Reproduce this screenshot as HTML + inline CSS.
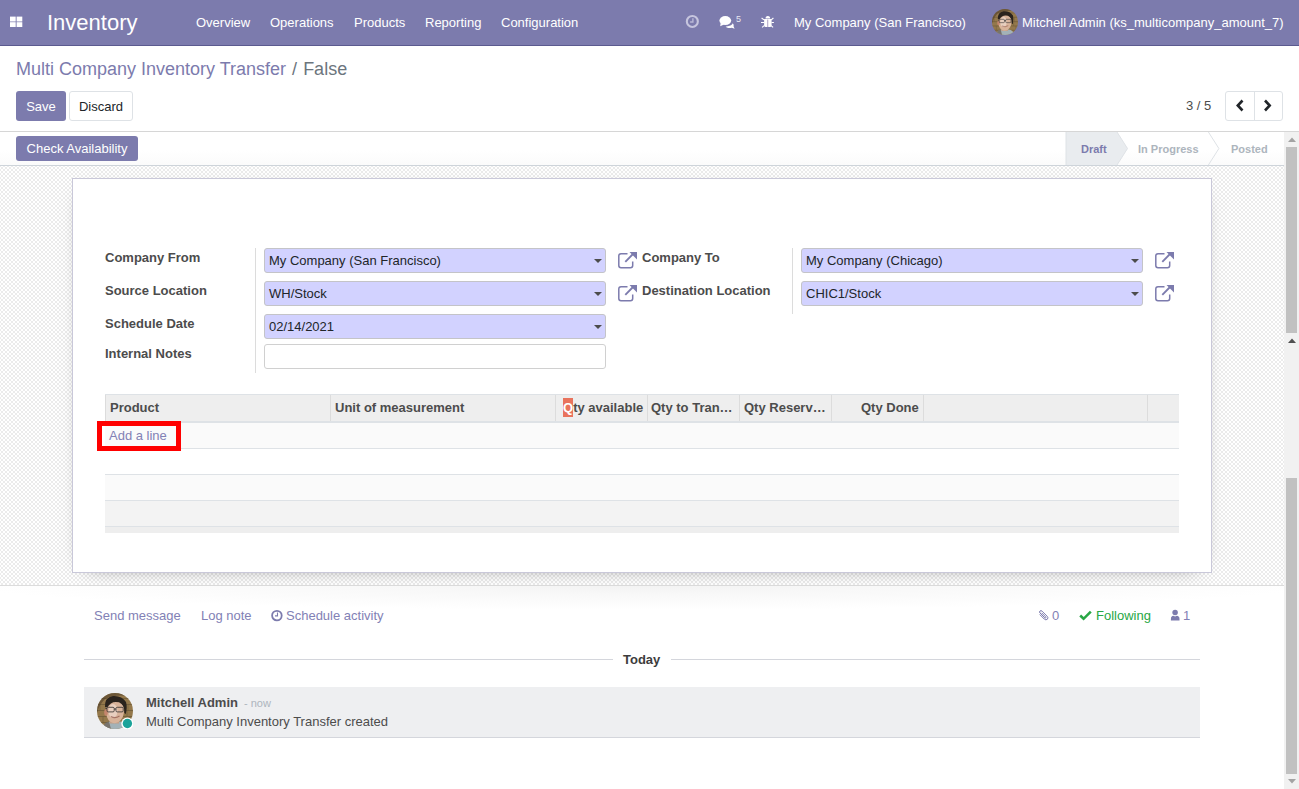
<!DOCTYPE html>
<html><head><meta charset="utf-8">
<style>
*{box-sizing:border-box;margin:0;padding:0}
html,body{width:1299px;height:789px;overflow:hidden;background:#fff;font-family:"Liberation Sans",sans-serif;font-size:13px;color:#4c4c4c}
.a{position:absolute;white-space:nowrap;line-height:15px}
.b{font-weight:bold}
svg.a{line-height:0}
#nav{position:absolute;left:0;top:0;width:1299px;height:46px;background:#7c7bad;border-bottom:1px solid #5b5a8f}
#nav .t{color:#fff}
#cp{position:absolute;left:0;top:46px;width:1299px;height:86px;background:#fff;border-bottom:1px solid #d6d6d6}
.btn{position:absolute;border-radius:3px;font-size:13px;text-align:center;white-space:nowrap}
.bp{background:#7c7bad;color:#fff}
.bs{background:#fff;color:#212529;border:1px solid #dee2e6}
#sb{position:absolute;left:0;top:132px;width:1284px;height:34px;background:linear-gradient(#fff 55%,#fbfbfb);border-bottom:1px solid #ced4da}
#bg{position:absolute;left:0;top:166px;width:1284px;height:420px;border-bottom:1px solid #dadada;background:#fff}
#sheet{position:absolute;left:72px;top:178px;width:1140px;height:395px;background:#fff;border:1px solid #c9c8d9;box-shadow:0 5px 20px -15px rgba(0,0,0,.75)}
.lbl{color:#4c4c4c}
.inp{position:absolute;height:25px;background:#d2d2ff;border:1px solid #c4c4c8;border-radius:3px;color:#222}
.car{position:absolute;width:0;height:0;border-left:4px solid transparent;border-right:4px solid transparent;border-top:4px solid #4c4c4c}
.vsep{position:absolute;width:1px;background:#dcdcdc}
#chat{position:absolute;left:0;top:586px;width:1284px;height:203px;background:#fff}
.lk{color:#8281b5}
.th{position:absolute;top:394px;height:29px;background:#eee;border-top:1px solid #dee2e6;border-bottom:2px solid #dee2e6}
.cd{position:absolute;top:395px;width:1px;height:26px;background:#dcdcdc}
.row{position:absolute;left:105px;width:1074px;border-bottom:1px solid #dee2e6}
</style></head><body>

<svg width="0" height="0" style="position:absolute"><defs>
<clipPath id="avc"><circle cx="18" cy="18" r="18"/></clipPath>
<symbol id="face" viewBox="0 0 36 36"><g clip-path="url(#avc)">
<rect width="36" height="36" fill="#94794b"/>
<path d="M0 5.5H36M0 11.5H36M0 17.5H36M0 23.5H36M0 29.5H36" stroke="#6e5a38" stroke-width="1.1" opacity=".75"/>
<path d="M5 0V5.5M14 5.5V11.5M3 11.5V17.5M31 11.5V17.5M30 17.5V23.5M33 23.5V29.5M6 23.5V29.5" stroke="#6e5a38" stroke-width="1" opacity=".6"/>
<path d="M0 0H36V4Q20 0 8 6Q2 12 0 20Z" fill="#4a3a28" opacity=".55"/>
<path d="M0 26Q6 30 8 36H0Z" fill="#3a3028" opacity=".6"/>
<path d="M5 36Q7 29 13 28.5L23 28.5Q29 29 31 36Z" fill="#a3b2b8"/><path d="M5 36Q7 29 12 28.5L14 36Z" fill="#5a4a3a" opacity=".6"/>
<path d="M13 25L22 25L22 30.5L13 30.5Z" fill="#c49e86"/>
<path d="M9.5 14Q10 8 18 7.8Q26.5 8.5 27 16Q27.5 25 21.5 29Q17 31.5 13 28.5Q9 25 9.3 19Z" fill="#d8b39a"/>
<ellipse cx="16" cy="18" rx="4.5" ry="7" fill="#efdccf" opacity=".7"/>
<ellipse cx="9" cy="19.5" rx="1.8" ry="3.3" fill="#c4856c"/>
<path d="M8 14Q7.5 4.5 16 3Q25 2.5 29 9Q30.5 14 28.8 21L27.3 20Q28 12 22 9.3Q14 7.5 10.3 14.5Z" fill="#2a231d"/>
<rect x="10" y="14.3" width="7.2" height="4.6" rx="1.2" fill="none" stroke="#45403c" stroke-width="0.9"/>
<rect x="19" y="14.3" width="7.2" height="4.6" rx="1.2" fill="none" stroke="#45403c" stroke-width="0.9"/>
<path d="M8.5 15.5H10M17.2 16H19" stroke="#3e3a38" stroke-width="1.1"/>
<path d="M14 23.5Q18 26 22.5 23" stroke="#8e5448" stroke-width="1.1" fill="none" opacity=".7"/>
</g></symbol></defs></svg>
<!-- NAVBAR -->
<div id="nav">
  <svg class="a" style="left:10px;top:16px" width="13" height="12" viewBox="0 0 13 12"><rect x="0" y="0.6" width="5.7" height="4.9" fill="#fff"/><rect x="6.6" y="0.6" width="5.7" height="4.9" fill="#fff"/><rect x="0" y="6.2" width="5.7" height="4.8" fill="#fff"/><rect x="6.6" y="6.2" width="5.7" height="4.8" fill="#fff"/></svg>
  <div class="t a" style="left:47px;top:10px;font-size:22px;line-height:26px">Inventory</div>
  <div class="t a" style="left:196px;top:15px">Overview</div>
  <div class="t a" style="left:270px;top:15px">Operations</div>
  <div class="t a" style="left:354px;top:15px">Products</div>
  <div class="t a" style="left:425px;top:15px">Reporting</div>
  <div class="t a" style="left:501px;top:15px">Configuration</div>
  <!-- clock -->
  <svg class="a" style="left:685px;top:14px" width="15" height="15" viewBox="0 0 15 15"><circle cx="7.35" cy="7.45" r="5.5" fill="none" stroke="#c6c5de" stroke-width="2.1"/><path d="M7.9 4.3V8H5.1" fill="none" stroke="#b9b8d6" stroke-width="1.4"/></svg>
  <!-- comments -->
  <svg class="a" style="left:718.5px;top:15.5px" width="17" height="14" viewBox="0 0 17 14"><ellipse cx="6.3" cy="4.6" rx="5.9" ry="4.5" fill="#fff"/><path d="M1.6 7 L1.2 10.3 L5 8.6Z" fill="#fff"/><path d="M6.6 10.4 Q9.5 10.6 12 9.3 Q13.5 8.4 13.7 7.3 Q15.2 8.6 14.6 10.4 L15.6 12.7 L12.8 11.7 Q11.2 12.3 9.3 12 Q7.5 11.6 6.6 10.4Z" fill="#fff"/></svg>
  <div class="a" style="left:736px;top:14px;font-size:9px;line-height:10px;color:#e8e8f2">5</div>
  <!-- bug -->
  <svg class="a" style="left:761px;top:15px" width="14" height="14" viewBox="0 0 14 14"><path d="M4.5 3.5 A2.35 2.6 0 0 1 9.2 3.5Z" fill="#fff"/><path d="M3.1 4H10.6V10.6Q10.6 12 9.2 12H4.5Q3.1 12 3.1 10.6Z" fill="#fff"/><path d="M0.6 3 L3 4.9 M12.4 3 L10.2 4.9 M0 7.5 H3.2 M12.9 7.5 H10.5 M1.1 12.4 L3.1 10.7 M12.1 12.4 L10.1 10.7" stroke="#fff" stroke-width="1.1"/><rect x="6.35" y="4.6" width="0.85" height="7.4" fill="#9e8fb8"/></svg>
  <div class="t a" style="left:794px;top:15px">My Company (San Francisco)</div>
  <!-- avatar -->
  <svg class="a" style="left:992px;top:9px" width="26" height="26" viewBox="0 0 36 36"><use href="#face"/></svg>
  <div class="t a" style="left:1022px;top:15px">Mitchell Admin (ks_multicompany_amount_7)</div>
</div>

<!-- CONTROL PANEL -->
<div id="cp">
  <div class="a" style="left:16px;top:12px;font-size:18px;line-height:22px"><span style="color:#7c7bad">Multi Company Inventory Transfer</span><span style="color:#6c757d;padding:0 6px 0 6px">/</span><span style="color:#6c757d">False</span></div>
  <div class="btn bp" style="left:16px;top:45px;width:50px;height:30px;line-height:32px">Save</div>
  <div class="btn bs" style="left:69px;top:45px;width:64px;height:30px;line-height:30px">Discard</div>
  <div class="a" style="left:1186px;top:52px;color:#4c4c4c">3 / 5</div>
  <div class="btn bs" style="left:1225px;top:45px;width:58px;height:30px"></div>
  <div class="a" style="left:1254px;top:46px;width:1px;height:28px;background:#dee2e6"></div>
  <svg class="a" style="left:1235px;top:53px" width="10" height="13" viewBox="0 0 10 13"><path d="M7.5 1.5 L2.8 6.5 L7.5 11.5" fill="none" stroke="#212529" stroke-width="2.6"/></svg>
  <svg class="a" style="left:1263px;top:53px" width="10" height="13" viewBox="0 0 10 13"><path d="M2 1.5 L6.7 6.5 L2 11.5" fill="none" stroke="#212529" stroke-width="2.6"/></svg>
</div>

<!-- STATUS BAR -->
<div id="sb">
  <div class="btn bp" style="left:16px;top:4px;width:122px;height:25px;line-height:25px">Check Availability</div>
  <svg class="a" style="left:1065px;top:0px" width="220" height="33" viewBox="0 0 220 33">
    <path d="M1 0 H52 L62.5 16.5 L52 33 H1Z" fill="#e9ecef"/>
    <path d="M1 0 V33" stroke="#dee2e6" stroke-width="1"/>
    <path d="M52 0 L62.5 16.5 L52 33" fill="none" stroke="#dee2e6" stroke-width="1"/>
    <path d="M143.4 0 L153.9 16.5 L143.4 33" fill="none" stroke="#dee2e6" stroke-width="1"/>
  </svg>
  <div class="a b" style="left:1081px;top:11px;font-size:11px;line-height:13px;color:#7c7bad">Draft</div>
  <div class="a b" style="left:1138px;top:11px;font-size:11px;line-height:13px;color:#adb5bd">In Progress</div>
  <div class="a b" style="left:1231px;top:11px;font-size:11px;line-height:13px;color:#adb5bd">Posted</div>
</div>

<!-- SHEET BG -->
<svg id="bgsvg" style="position:absolute;left:0;top:166px" width="1284" height="419" shape-rendering="crispEdges"><defs><pattern id="chk" x="1" y="3" width="4" height="4" patternUnits="userSpaceOnUse"><rect width="4" height="4" fill="#fff"/><rect x="2" y="0" width="2" height="2" fill="#ebebeb"/><rect x="0" y="2" width="2" height="2" fill="#ebebeb"/></pattern></defs><rect width="1284" height="419" fill="url(#chk)"/></svg>
<div style="position:absolute;left:0;top:585px;width:1284px;height:1px;background:#dcdcdc"></div>
<div id="sheet"></div>

<!-- FORM FIELDS -->
<div class="a b lbl" style="left:105px;top:250px">Company From</div>
<div class="a b lbl" style="left:105px;top:283px">Source Location</div>
<div class="a b lbl" style="left:105px;top:316px">Schedule Date</div>
<div class="a b lbl" style="left:105px;top:346px">Internal Notes</div>
<div class="vsep" style="left:255px;top:248px;height:125px"></div>

<div class="inp" style="left:264px;top:248px;width:342px"></div>
<div class="a" style="left:269px;top:253px;color:#212529">My Company (San Francisco)</div>
<div class="car" style="left:594px;top:259px"></div>
<div class="inp" style="left:264px;top:281px;width:342px"></div>
<div class="a" style="left:269px;top:286px;color:#212529">WH/Stock</div>
<div class="car" style="left:594px;top:292px"></div>
<div class="inp" style="left:264px;top:314px;width:342px"></div>
<div class="a" style="left:269px;top:319px;color:#212529">02/14/2021</div>
<div class="car" style="left:594px;top:325px"></div>
<div class="inp" style="left:264px;top:344px;width:342px;background:#fff;border-color:#d0d0d0"></div>

<svg class="a" style="left:617px;top:251px" width="21" height="18" viewBox="0 0 21 18"><path d="M10.5 2.8 H4 Q1.8 2.8 1.8 5 V14.5 Q1.8 16.7 4 16.7 H13.5 Q15.7 16.7 15.7 14.5 V10.5" fill="none" stroke="#7c7bad" stroke-width="1.5"/><path d="M8.3 10.8 L17 2" stroke="#7c7bad" stroke-width="1.9"/><path d="M12.5 1 H20 V8.5Z" fill="#7c7bad"/></svg>
<svg class="a" style="left:617px;top:284px" width="21" height="18" viewBox="0 0 21 18"><path d="M10.5 2.8 H4 Q1.8 2.8 1.8 5 V14.5 Q1.8 16.7 4 16.7 H13.5 Q15.7 16.7 15.7 14.5 V10.5" fill="none" stroke="#7c7bad" stroke-width="1.5"/><path d="M8.3 10.8 L17 2" stroke="#7c7bad" stroke-width="1.9"/><path d="M12.5 1 H20 V8.5Z" fill="#7c7bad"/></svg>

<div class="a b lbl" style="left:642px;top:250px">Company To</div>
<div class="a b lbl" style="left:642px;top:283px">Destination Location</div>
<div class="vsep" style="left:792px;top:248px;height:66px"></div>
<div class="inp" style="left:801px;top:248px;width:342px"></div>
<div class="a" style="left:806px;top:253px;color:#212529">My Company (Chicago)</div>
<div class="car" style="left:1131px;top:259px"></div>
<div class="inp" style="left:801px;top:281px;width:342px"></div>
<div class="a" style="left:806px;top:286px;color:#212529">CHIC1/Stock</div>
<div class="car" style="left:1131px;top:292px"></div>
<svg class="a" style="left:1154px;top:251px" width="21" height="18" viewBox="0 0 21 18"><path d="M10.5 2.8 H4 Q1.8 2.8 1.8 5 V14.5 Q1.8 16.7 4 16.7 H13.5 Q15.7 16.7 15.7 14.5 V10.5" fill="none" stroke="#7c7bad" stroke-width="1.5"/><path d="M8.3 10.8 L17 2" stroke="#7c7bad" stroke-width="1.9"/><path d="M12.5 1 H20 V8.5Z" fill="#7c7bad"/></svg>
<svg class="a" style="left:1154px;top:284px" width="21" height="18" viewBox="0 0 21 18"><path d="M10.5 2.8 H4 Q1.8 2.8 1.8 5 V14.5 Q1.8 16.7 4 16.7 H13.5 Q15.7 16.7 15.7 14.5 V10.5" fill="none" stroke="#7c7bad" stroke-width="1.5"/><path d="M8.3 10.8 L17 2" stroke="#7c7bad" stroke-width="1.9"/><path d="M12.5 1 H20 V8.5Z" fill="#7c7bad"/></svg>

<!-- TABLE -->
<div class="th" style="left:105px;width:1074px"></div>
<div class="cd" style="left:105px"></div>
<div class="cd" style="left:330px"></div>
<div class="cd" style="left:555px"></div>
<div class="cd" style="left:647px"></div>
<div class="cd" style="left:739px"></div>
<div class="cd" style="left:831px"></div>
<div class="cd" style="left:923px"></div>
<div class="cd" style="left:1147px"></div>
<div class="a b" style="left:110px;top:400px">Product</div>
<div class="a b" style="left:335px;top:400px">Unit of measurement</div>
<div class="a" style="left:563px;top:398px;width:10px;height:19px;background:#e9735d"></div>
<div class="a b" style="left:563px;top:400px"><span style="color:#fff">Q</span>ty available</div>
<div class="a b" style="left:651px;top:400px">Qty to Tran…</div>
<div class="a b" style="left:744px;top:400px">Qty Reserv…</div>
<div class="a b" style="left:861px;top:400px">Qty Done</div>

<div class="row" style="top:423px;height:26px;background:#fafafa"></div>
<div class="row" style="top:449px;height:26px;background:#fff"></div>
<div class="row" style="top:475px;height:26px;background:#fafafa"></div>
<div class="row" style="top:501px;height:26px;background:#f3f3f3"></div>
<div class="row" style="top:527px;height:6px;background:#eee;border:none"></div>
<div class="a lk" style="left:109px;top:428px">Add a line</div>
<div class="a" style="left:97px;top:421px;width:84px;height:30px;border:5px solid #ff0000"></div>

<!-- CHATTER -->
<div id="chat"></div>
<div class="a" style="left:0;top:586px;width:1284px;height:24px;background:radial-gradient(ellipse 52% 100% at 50% 0%,#f3f3f3 0%,#f8f8f8 35%,rgba(255,255,255,0) 100%)"></div>
<div class="a lk" style="left:94px;top:608px">Send message</div>
<div class="a lk" style="left:201px;top:608px">Log note</div>
<svg class="a" style="left:271px;top:609px" width="12" height="13" viewBox="0 0 12 13"><circle cx="5.9" cy="6.6" r="4.8" fill="none" stroke="#7c7bad" stroke-width="1.8"/><path d="M6.5 3.6V6.9H4" fill="none" stroke="#7c7bad" stroke-width="1.1"/></svg>
<div class="a lk" style="left:286px;top:608px">Schedule activity</div>

<svg class="a" style="left:1038px;top:609px" width="11" height="12" viewBox="0 0 11 12"><path transform="translate(11 0) scale(-1 1)" d="M9.3 5.5 L4.8 10 Q3 11.6 1.6 10.2 Q0.3 8.8 1.9 7.2 L7 2.1 Q8 1.1 9 2 Q10 3 9 4 L4.2 8.8 Q3.6 9.3 3.2 8.9 Q2.8 8.4 3.3 7.9 L7.4 3.8" fill="none" stroke="#7c7bad" stroke-width="1"/></svg>
<div class="a lk" style="left:1052px;top:608px">0</div>
<svg class="a" style="left:1079px;top:610px" width="13" height="11" viewBox="0 0 13 11"><path d="M1.2 5.5 L4.6 8.8 L11.8 1.6" fill="none" stroke="#28a745" stroke-width="2.6"/></svg>
<div class="a" style="left:1096px;top:608px;color:#28a745">Following</div>
<svg class="a" style="left:1170px;top:609px" width="10" height="12" viewBox="0 0 10 12"><circle cx="5.1" cy="3.6" r="2.75" fill="#7c7bad"/><path d="M0.9 11.6 V9.9 Q0.9 6.9 3.4 6.7 L5.1 7.4 L6.8 6.7 Q9.5 6.9 9.5 9.9 V11.6Z" fill="#7c7bad"/></svg>
<div class="a lk" style="left:1183px;top:608px">1</div>

<div class="a" style="left:84px;top:659px;width:529px;height:1px;background:#d4d6dc"></div>
<div class="a" style="left:671px;top:659px;width:529px;height:1px;background:#d4d6dc"></div>
<div class="a b" style="left:623px;top:652px;color:#3d3d3d">Today</div>

<div class="a" style="left:84px;top:687px;width:1116px;height:51px;background:#eeeff1;border-bottom:1px solid #d4d6dc"></div>
<svg class="a" style="left:97px;top:693px" width="36" height="36" viewBox="0 0 36 36"><use href="#face"/><circle cx="30.4" cy="30.5" r="6.1" fill="#fff"/><circle cx="30.4" cy="30.5" r="4.7" fill="#1ba39a"/></svg>
<div class="a b" style="left:146px;top:695px;color:#4c4c4c">Mitchell Admin</div>
<div class="a" style="left:244px;top:697px;font-size:11px;line-height:13px;color:#adb5bd">- now</div>
<div class="a" style="left:146px;top:714px;color:#4c4c4c">Multi Company Inventory Transfer created</div>

<!-- SCROLLBAR -->
<div class="a" style="left:1284px;top:132px;width:15px;height:657px;background:#f1f1f1"></div>
<div class="a" style="left:1286px;top:147px;width:11px;height:186px;background:#c1c1c1"></div>
<svg class="a" style="left:1288px;top:137px" width="8" height="5" viewBox="0 0 8 5"><path d="M0 5 L4 0.5 L8 5Z" fill="#a3a3a3"/></svg>
<svg class="a" style="left:1288px;top:338px" width="8" height="5" viewBox="0 0 8 5"><path d="M0 5 L4 0.5 L8 5Z" fill="#505050"/></svg>
<div class="a" style="left:1286px;top:478px;width:11px;height:296px;background:#c1c1c1"></div>
<svg class="a" style="left:1288px;top:779px" width="8" height="5" viewBox="0 0 8 5"><path d="M0 0 L4 4.5 L8 0Z" fill="#a3a3a3"/></svg>

</body></html>
